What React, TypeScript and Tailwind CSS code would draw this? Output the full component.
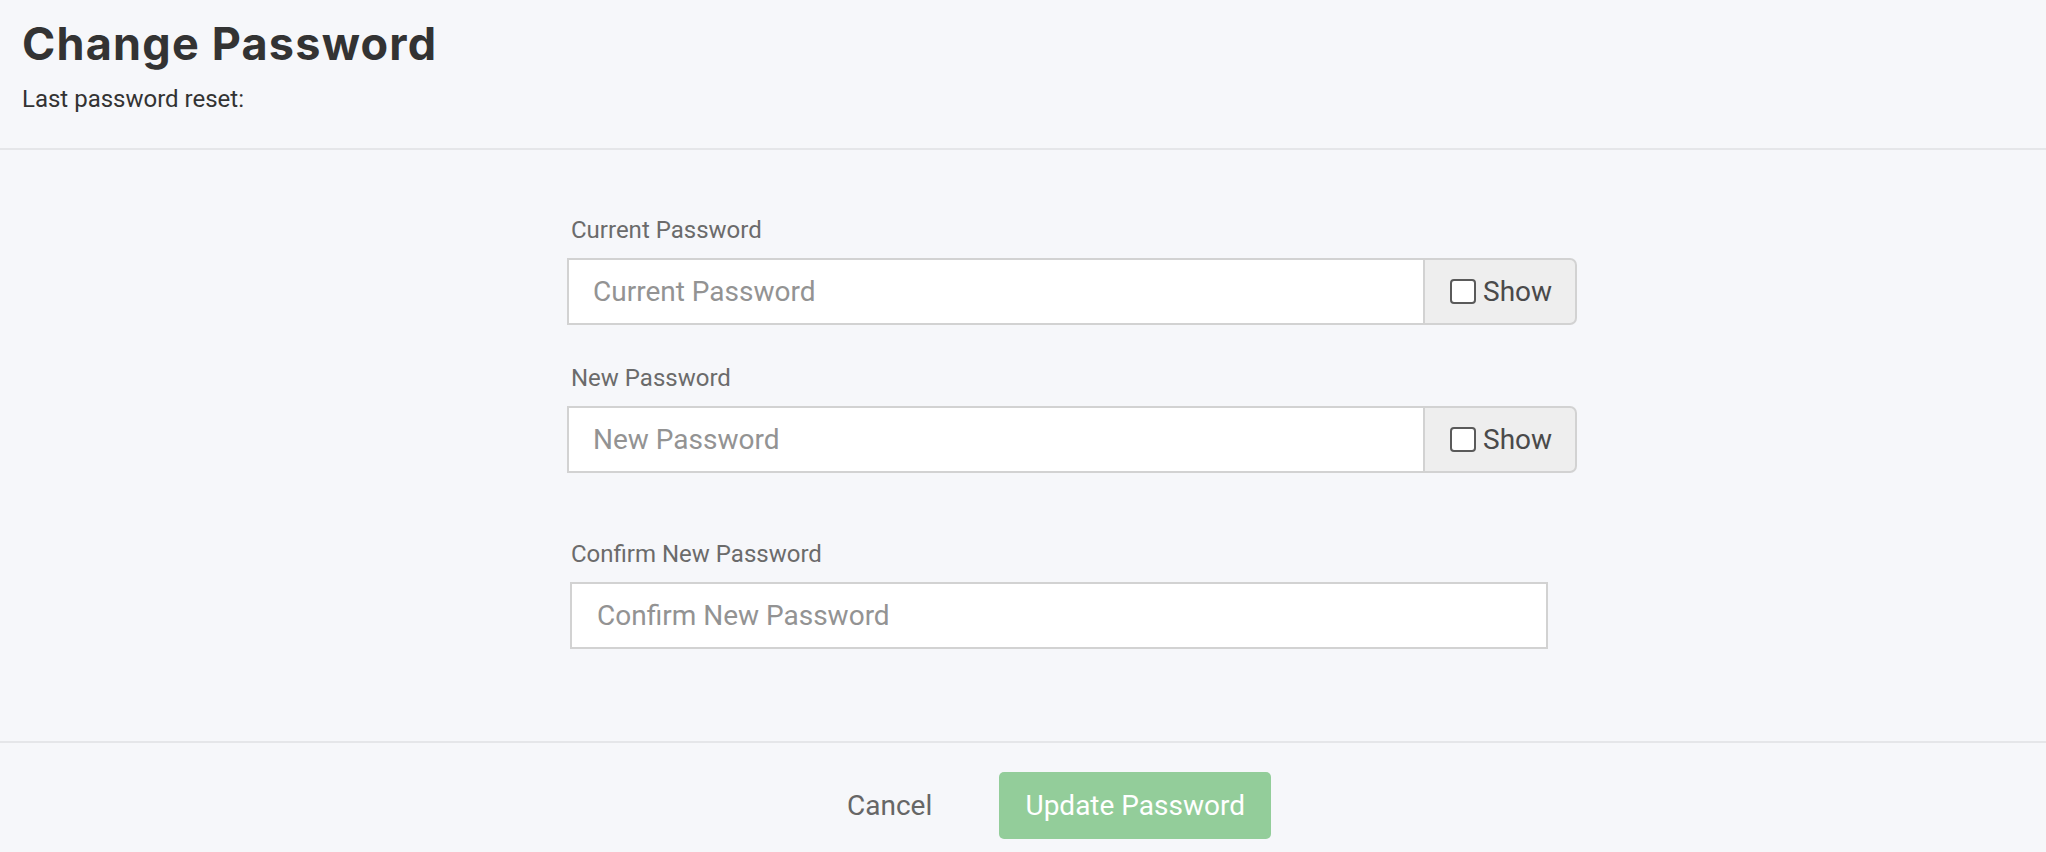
import React from "react";

const PasswordField = ({ label, placeholder }: { label: string; placeholder: string }) => {
  return (
    <div>
      <label className="block pl-[4px] text-[24px] leading-[28px] text-[#6b6b6b]">{label}</label>
      <div className="mt-[14px] flex h-[67px] w-[1010px]">
        <input
          type="password"
          placeholder={placeholder}
          className="h-full w-[858px] border-2 border-[#d2d2d2] bg-white px-[24px] text-[28px] text-[#333] outline-none placeholder:text-[#939393]"
        />
        <label className="flex h-full w-[152px] items-center rounded-r-[7px] border-2 border-l-0 border-[#d2d2d2] bg-[#eeeeee] pl-[25px] text-[28px] text-[#4a4a4a]">
          <span className="mr-[7px] block h-[25px] w-[26px] rounded-[4px] border-2 border-[#5a5a5a] bg-white" />
          Show
        </label>
      </div>
    </div>
  );
};

const App = () => {
  return (
    <div className="min-h-screen bg-[#f6f7fa] font-['Roboto',sans-serif]">
      <div className="border-b-2 border-[#e5e6e9] px-[22px] pt-[18px] pb-[34px]">
        <h1 className="font-['Inter',sans-serif] text-[45px] leading-[52px] font-bold tracking-[1.2px] text-[#333333]">
          Change Password
        </h1>
        <p className="mt-[14px] text-[24px] leading-[30px] text-[#333333]">Last password reset:</p>
      </div>

      <div className="border-b-2 border-[#e5e6e9] pt-[66px] pb-[92px] pl-[567px]">
        <PasswordField label="Current Password" placeholder="Current Password" />
        <div className="mt-[39px]">
          <PasswordField label="New Password" placeholder="New Password" />
        </div>
        <div className="mt-[67px] pl-[3px]">
          <label className="block pl-[1px] text-[24px] leading-[28px] text-[#6b6b6b]">Confirm New Password</label>
          <input
            type="password"
            placeholder="Confirm New Password"
            className="mt-[14px] block h-[67px] w-[978px] border-2 border-[#d2d2d2] bg-white px-[25px] text-[28px] text-[#333] outline-none placeholder:text-[#939393]"
          />
        </div>
      </div>

      <div className="flex items-center pt-[29px] pb-[13px] pl-[847px]">
        <button className="text-[28px] leading-[34px] text-[#666666]">Cancel</button>
        <button className="ml-[67px] h-[67px] w-[272px] rounded-[5px] bg-[#93cd9a] text-[28px] text-white">
          Update Password
        </button>
      </div>
    </div>
  );
};

export default App;
